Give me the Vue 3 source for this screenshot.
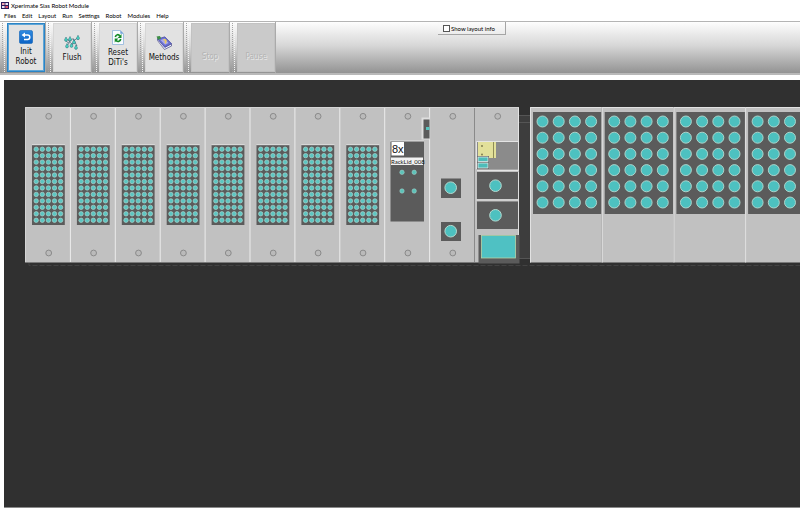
<script setup>
import { ref } from 'vue'

const menus = ['Files', 'Edit', 'Layout', 'Run', 'Settings', 'Robot', 'Modules', 'Help']
const tools = [
  { id: 'init', lines: ['Init', 'Robot'], active: true },
  { id: 'flush', lines: ['Flush'] },
  { id: 'reset', lines: ['Reset', "DiTi's"] },
  { id: 'methods', lines: ['Methods'] },
  { id: 'stop', lines: ['Stop'], disabled: true },
  { id: 'pause', lines: ['Pause'], disabled: true },
]
const drops = [[2, 2], [6, 1.5], [14, 0.3], [10, 4.5], [3, 8.5], [7.5, 8], [12, 10]]
const showInfo = ref(false)

const range = (n, start, step) => Array.from({ length: n }, (_, i) => start + i * step)
const carriers = range(11, 25.5, 44.9)
const racks = range(8, 32, 44.9)
const wellX = range(5, 4.2, 6.1)
const wellY = range(12, 4.2, 6.46)
const troughs = range(4, 530, 71.7)
const tubeX = range(4, 12.5, 16.2)
const tubeY = range(6, 14.5, 16.2)
</script>

<template>
  <div class="window">
    <header class="titlebar">
      <svg class="logo" width="8" height="7" viewBox="0 0 8 7" aria-hidden="true">
        <rect width="8" height="7" fill="#2b1d5c" />
        <rect x="1" y="1" width="2.6" height="2" fill="#f3a6b4" />
        <rect x="4.4" y="1" width="2.6" height="2" fill="#e8e6f6" />
        <rect x="1" y="4" width="2.6" height="2" fill="#e8e6f6" />
        <rect x="4.4" y="4" width="2.6" height="2" fill="#e0566e" />
      </svg>
      <span>Xperimate Sias Robot Module</span>
    </header>

    <nav class="menubar">
      <button v-for="m in menus" :key="m" type="button">{{ m }}</button>
    </nav>

    <div class="toolbar">
      <div v-for="t in tools" :key="t.id" class="band">
        <span class="grip"></span>
        <button type="button" class="tool" :class="{ active: t.active }" :disabled="t.disabled">
          <svg v-if="t.id === 'init'" width="14" height="14" viewBox="0 0 14 14" aria-hidden="true">
            <defs>
              <linearGradient id="blue" x1="0" y1="0" x2="0" y2="1">
                <stop offset="0" stop-color="#2f8ae0" />
                <stop offset="1" stop-color="#0b62c4" />
              </linearGradient>
            </defs>
            <rect x=".4" y=".4" width="13.2" height="13.2" rx="1.8" fill="url(#blue)" stroke="#0c5fb4" stroke-width=".6" />
            <path d="M4.5 5H8.6a2.1 2.1 0 0 1 0 4.4H5" fill="none" stroke="#fff" stroke-width="1.5" />
            <path d="M2.6 5 6 2.5v5z" fill="#fff" />
          </svg>
          <svg v-else-if="t.id === 'flush'" width="16" height="15" viewBox="0 0 16 15" aria-hidden="true">
            <path d="M1 5 5 8.500 3.500 10M4.500 8 9 3.500 13 11M8 10l2.500-5M3.500 4l3 4M10 5.500 13.500 3" fill="none" stroke="#36566a" stroke-width=".7" />
            <path
              v-for="(d, i) in drops"
              :key="i"
              :transform="`translate(${d[0]} ${d[1]})`"
              d="M0 0C.5 1.500 1.400 2 1.400 3A1.400 1.400 0 0 1-1.400 3C-1.400 2-.5 1.500 0 0z"
              fill="#48d6c4"
              stroke="#1f6470"
              stroke-width=".5"
            />
          </svg>
          <svg v-else-if="t.id === 'reset'" width="12" height="15" viewBox="0 0 12 15" aria-hidden="true">
            <path d="M.5.500h7.800l3.200 3.200v10.800H.5z" fill="#f7fbff" stroke="#8eb4da" stroke-width=".8" />
            <path d="M8.300.500v3.200h3.200z" fill="#6d9fd8" />
            <path d="M3.300 7C4 4.300 6.600 4 7.800 6M8.700 9C8.200 11.900 5.500 12.200 4 10.300" fill="none" stroke="#148b28" stroke-width="1.700" />
            <path d="M9.500 4v4H5.600zM2.700 12.500V8.600h3.700z" fill="#148b28" />
          </svg>
          <svg v-else-if="t.id === 'methods'" width="16" height="15" viewBox="0 0 16 15" aria-hidden="true">
            <path d="M1.500 5.500 8.500 14.500 15.500 11V8.800L9 12 1.800 3z" fill="#eceef8" stroke="#34327c" stroke-width=".6" />
            <path d="M1.500 4 8.800 1.800 15.500 8.600 8.800 12.400z" fill="#6a6fce" stroke="#3b3c96" stroke-width=".6" />
            <path d="M4.500 5 8.500 3.500 12.500 8 9 9.800z" fill="#a9a8ee" />
            <path d="M7.500 5.200c2-1.300 3.500 1 1.800 2l.7 1.200" fill="none" stroke="#f2cf50" stroke-width="1.400" />
            <path d="M.500 1.600 3.800 1 5.200 3.200 2.300 5z" fill="#3d8f45" />
          </svg>
          <span class="caption"><span v-for="l in t.lines" :key="l">{{ l }}</span></span>
        </button>
      </div>
      <div class="rest">
        <label class="info">
          <input v-model="showInfo" type="checkbox" />
          <span>Show layout info</span>
        </label>
      </div>
    </div>

    <main class="workspace">
      <svg class="deck" role="img" aria-label="Robot deck layout">
        <g transform="translate(-4 -80)">
          <rect x="519" y="115" width="12" height="144" fill="#3d3d3d" />
          <path d="M519 115.500h11M519 122.500h11M519 258.500h11" stroke="#555" fill="none" />
          <path d="M29 262v3.500H2000" stroke="#434343" stroke-dasharray="5 2" fill="none" />

          <rect x="25" y="107" width="494" height="155.500" fill="#c1c1c1" />
          <path d="M25.500 262V107.500H519" fill="none" stroke="#d4d4d4" />
          <g v-for="(x, i) in carriers" :key="'c' + i">
            <path v-if="i > 0 && i < 10" :d="`M${x} 108V262`" stroke="#ececec" />
            <path v-if="i === 10" :d="`M${x} 108V262`" stroke="#8a8a8a" />
            <g fill="#bababa" stroke="#858585" stroke-width=".9">
              <circle :cx="x + 23.200" cy="116.300" r="2.900" />
              <circle v-if="i < 10" :cx="x + 23.200" cy="253" r="2.900" />
            </g>
          </g>

          <g v-for="(x, i) in racks" :key="'r' + i" :transform="`translate(${x} 145)`">
            <rect width="32.800" height="80" fill="#5b5b5b" />
            <path d="M0-.3H33" stroke="#dedede" />
            <template v-for="cy in wellY" :key="cy">
              <circle v-for="cx in wellX" :key="cx" :cx="cx" :cy="cy" r="2.200" fill="#5cc6c2" stroke="#a9d5ce" stroke-width=".7" />
            </template>
          </g>

          <rect x="421.500" y="117.500" width="8.500" height="22" fill="#dedede" />
          <rect x="423.500" y="119.500" width="6" height="19" fill="#5b5b5b" />
          <rect x="426" y="127" width="3.500" height="3" fill="#58c3bd" />

          <rect x="390.500" y="141" width="33.500" height="80.500" fill="#5b5b5b" />
          <path d="M390 141H424" stroke="#e2e2e2" />
          <rect x="391.500" y="142" width="12.500" height="13.500" fill="#fff" />
          <text x="392" y="153" class="count">8x</text>
          <rect x="391" y="157.500" width="32" height="7.500" fill="#f1f1f1" />
          <text x="391" y="164" class="tag">RackLid_008</text>
          <g fill="#5cc3b9" stroke="#9fcfca" stroke-width=".6">
            <circle cx="402" cy="172.300" r="2.200" />
            <circle cx="414.200" cy="172.300" r="2.200" />
            <circle cx="402" cy="191" r="2.200" />
            <circle cx="414.200" cy="191" r="2.200" />
          </g>

          <rect x="441" y="178.500" width="20" height="19.500" fill="#5b5b5b" />
          <rect x="441" y="222" width="20" height="19" fill="#5b5b5b" />

          <rect x="477" y="141.500" width="41" height="28" fill="#8b8b8b" />
          <rect x="478" y="142" width="18" height="16" fill="#e2e09a" />
          <path d="M493.500 142v16" stroke="#8f8d58" />
          <path d="M476.500 169V141.500H518M477 170.500H518.500V108" fill="none" stroke="#e4e4e4" />
          <circle cx="482" cy="146" r=".9" fill="#77754a" />
          <circle cx="482" cy="154.500" r=".9" fill="#77754a" />
          <rect x="477" y="156" width="12" height="13" fill="#5b5b5b" />
          <g fill="#4dbcb9" stroke="#e0eeee" stroke-width=".8">
            <rect x="478" y="157" width="10" height="4.500" />
            <rect x="478" y="163" width="10" height="5" />
          </g>
          <rect x="477" y="172" width="41" height="27" fill="#5b5b5b" />
          <rect x="477" y="201.500" width="41" height="27.500" fill="#5b5b5b" />
          <path d="M476 200H518.500M518.500 172V235" fill="none" stroke="#dedede" />
          <rect x="478.500" y="235" width="41" height="28.500" fill="#5b5b5b" />
          <rect x="481.500" y="235.500" width="34" height="22.500" fill="#4fc1c3" stroke="#b6d5a9" stroke-width=".8" />
          <g fill="#4dc1c0" stroke="#b4dad0">
            <circle cx="450.700" cy="187.700" r="5.800" />
            <circle cx="450.700" cy="231.200" r="5.800" />
            <circle cx="495.500" cy="185.700" r="5.800" />
            <circle cx="495.500" cy="215.300" r="5.800" />
          </g>

          <g v-for="(x, i) in troughs" :key="'t' + i" :transform="`translate(${x} 107)`">
            <rect width="71.700" height="155.500" fill="#c1c1c1" />
            <path d="M.5 155.500V.5H71.700" fill="none" stroke="#e2e2e2" />
            <rect x="3" y="5" width="68.500" height="102" fill="#5b5b5b" />
            <template v-for="cy in tubeY" :key="cy">
              <circle v-for="cx in tubeX" :key="cx" :cx="cx" :cy="cy" r="5.500" fill="#4dc1c0" stroke="#b4dad0" stroke-width=".9" />
            </template>
          </g>
        </g>
      </svg>
    </main>
  </div>
</template>

<style>
body {
  background: #fff;
}
</style>

<style scoped>
.window {
  display: flex;
  flex-direction: column;
  min-height: 100vh;
  font-family: Lato, "Liberation Sans", sans-serif;
  font-size: 6px;
  color: #000;
}
.window * {
  box-sizing: border-box;
}
.titlebar {
  display: flex;
  align-items: center;
  gap: 2px;
  height: 11px;
  padding-left: 1px;
}
.menubar {
  display: flex;
  gap: 6px;
  height: 10px;
  padding-left: 4px;
}
.menubar button {
  padding: 0;
  border: 0;
  background: none;
  font: inherit;
  color: inherit;
  line-height: 10px;
}
.toolbar {
  display: flex;
  height: 54px;
  border-top: 1px solid #b4b4b4;
  border-bottom: 2px solid #b9b9b9;
  background: linear-gradient(#fdfdfd, #d8d8d8 45%, #939393);
}
.band {
  display: flex;
  gap: 2px;
  width: 46px;
  padding: 1px 0 1px 2px;
  border-right: 1px solid #aaa;
}
.grip {
  width: 3px;
  border-left: 1px dotted #a5a5a5;
  border-right: 1px dotted #f4f4f4;
}
.tool {
  flex: 1;
  display: flex;
  flex-direction: column;
  align-items: center;
  justify-content: center;
  gap: 3px;
  padding: 2px 0 0;
  border: 1px solid #d6d6d6;
  background: #e2e2e2;
  color: #111;
  font-family: "DejaVu Sans Condensed", "DejaVu Sans", sans-serif;
  font-size: 8px;
  line-height: 10px;
}
.tool.active {
  border: 1px solid #2a84c6;
  box-shadow: inset 0 0 0 1px #5fa5d6;
}
.tool svg {
  flex: none;
}
.tool:disabled {
  border-color: #c2c2c2;
  background: #cacaca;
  color: #b4b4b4;
  text-shadow: 1px 1px 0 #e8e8e8;
  padding-top: 18px;
}
.caption {
  display: flex;
  flex-direction: column;
}
.rest {
  flex: 1;
  padding-left: 162px;
}
.info {
  display: inline-flex;
  align-items: center;
  gap: 1px;
  width: 68px;
  height: 13px;
  padding-left: 5px;
  border-right: 1px solid #a5a5a5;
  border-bottom: 1px solid #a5a5a5;
  background: linear-gradient(#fcfcfc, #ececec);
  white-space: nowrap;
}
.info input {
  appearance: none;
  width: 7px;
  height: 7px;
  margin: 0;
  border: 1px solid #555;
  background: #fff;
}
.info input:checked {
  background: #2a84c6;
}
.workspace {
  flex: 1;
  display: flex;
  margin: 5px 0 5px 4px;
  border-bottom: 1px solid #8a8a8a;
  background: #303030;
  overflow: hidden;
}
.deck {
  flex: 1;
  width: 100%;
  min-height: 200px;
}
.count {
  font: 11px "Liberation Sans", sans-serif;
  fill: #111;
}
.tag {
  font: 6px Lato, "Liberation Sans", sans-serif;
  fill: #111;
}
</style>
